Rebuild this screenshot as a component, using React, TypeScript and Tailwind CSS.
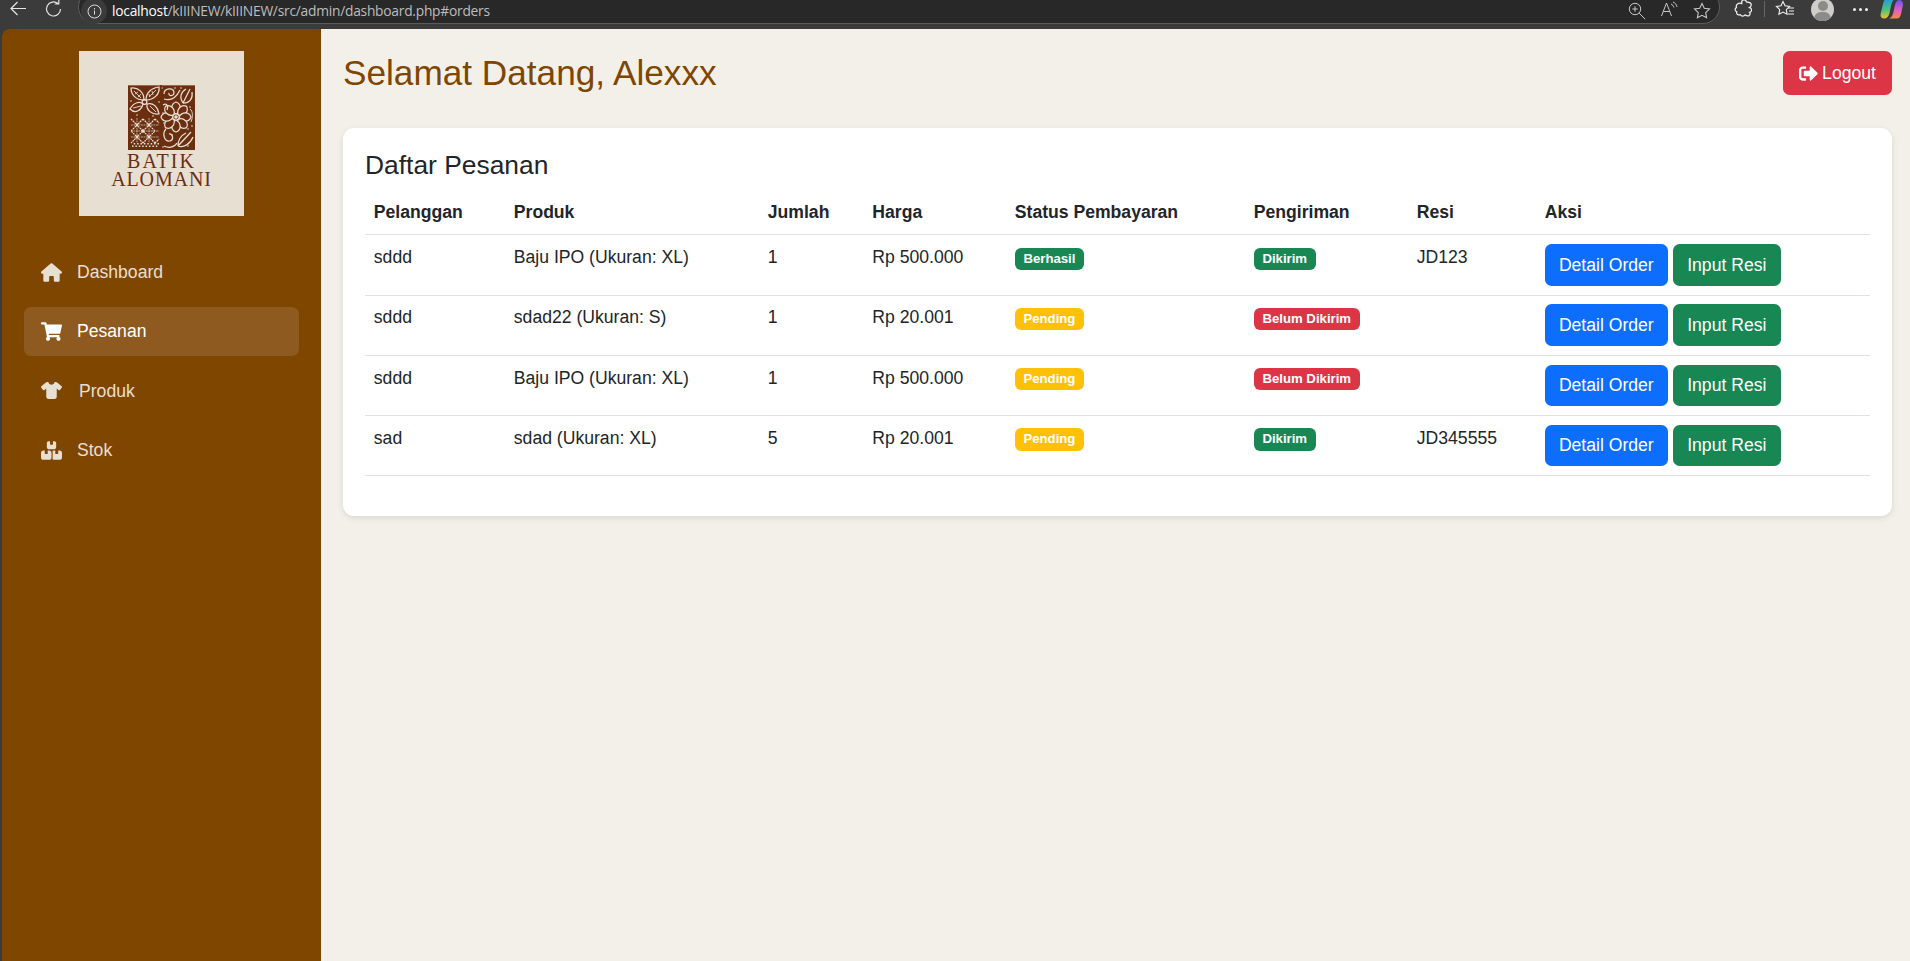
import React from "react";
import { FaHouse, FaShirt, FaBoxesStacked } from "react-icons/fa6";
import { FaSignOutAlt, FaShoppingCart } from "react-icons/fa";

const C = "#e8dfd3";

function BatikMotif() {
  const petals = [0, 45, 90, 135, 180, 225, 270, 315];
  const dots: [number, number][] = [];
  for (let x = 4; x < 31; x += 3.4) {
    dots.push([x, 62]);
    dots.push([x + 1.7, 59.5]);
  }
  const specks: [number, number][] = [
    [3, 16], [31, 17], [9, 30], [25, 31], [35, 28], [62, 22], [36, 38], [64, 41], [44, 50], [35, 62], [60, 44], [53, 3], [34, 3], [47, 3], [60, 61],
  ];
  return (
    <svg width="67" height="65" viewBox="0 0 67 65" className="block">
      <rect width="67" height="65" fill="#6b2e10" />
      <rect width="67" height="1" fill="#9a6a4c" />
      <g fill="none" stroke={C} strokeWidth="1.25">
        <path d="M3 3 C10 2 16 7 16 15 C8 15 3 10 3 3Z" />
        <path d="M31 2 C32 9 26 15 18 15 C18 8 23 3 31 2Z" />
        <path d="M2 24 C6 17 12 16 15 19 C13 26 7 29 2 24Z" />
        <path d="M19 19 C25 17 30 22 31 29 C24 30 18 25 19 19Z" />
        <circle cx="16.5" cy="17" r="2.4" />
        <path d="M6 6 L13 13 M28 5 L21 12 M5 23 L13 21 M22 21 L28 27" strokeWidth="0.9" />
        <path d="M7 9 L10 7 M10 12 L13 9 M24 6 L25 10 M21 9 L22 12" strokeWidth="0.8" />
      </g>
      <g fill="none" stroke={C} strokeWidth="1.2" strokeDasharray="1.8 0.7">
        <path d="M3 34 L15 46 L3 58 M15 34 L27 46 L15 58 M27 34 L31 38 M27 58 L31 54" />
        <path d="M15 34 L3 46 L15 58 M27 34 L15 46 L27 58" />
        <path d="M9 33 V58 M21 33 V58 M3 46 H31 M3 40 H31 M3 52 H31" strokeWidth="0.7" />
      </g>
      <g fill={C}>
        {dots.map(([x, y], i) => (
          <rect key={i} x={x} y={y - 1.5} width="1.5" height="1.5" />
        ))}
        {specks.map(([x, y], i) => (
          <circle key={i} cx={x} cy={y} r="0.8" />
        ))}
        <circle cx="9" cy="40" r="1.4" />
        <circle cx="21" cy="40" r="1.4" />
        <circle cx="9" cy="52" r="1.4" />
        <circle cx="21" cy="52" r="1.4" />
        <circle cx="15" cy="46" r="1.7" />
      </g>
      <rect x="32" y="0" width="1.6" height="65" fill="#6b2e10" />
      <g fill="#6b2e10" stroke={C} strokeWidth="1.2" transform="translate(48 32)">
        {petals.map((a) => (
          <path key={a} transform={`rotate(${a})`} d="M0 -3 C-5.500 -6 -5.500 -13 0 -15 C5.500 -13 5.500 -6 0 -3Z" />
        ))}
        <circle r="3.2" />
        <circle r="1.2" fill={C} />
      </g>
      <g fill="none" stroke={C} strokeWidth="1.25">
        <path d="M36 9 C36 3 45 2 46 7 C46 12 40 11 41 8" />
        <path d="M36 14 C42 16 48 13 52 5" />
        <path d="M55 18 L62 4 M55 18 C51 12 53 7 58 4 M55 18 C62 18 65 13 64 7" />
        <path d="M35 20 C38 18 41 20 39 25" />
        <path d="M38 44 C34 48 36 57 42 56 C46 55 45 48 41 49" />
        <path d="M36 61 C40 63 46 63 49 58" />
        <path d="M50 61 L63 47 M50 61 C50 54 54 50 58 48 M50 61 C56 63 62 59 65 52" />
        <path d="M62 24 C65 26 65 32 63 37" strokeWidth="0.9" />
      </g>
    </svg>
  );
}

function Logo() {
  return (
    <div className="w-[165px] h-[165px] bg-[#e8dfd3] flex flex-col items-center pt-[34px] mx-auto">
      <BatikMotif />
      <div
        className="mt-[3px] text-[#6b2e10] text-center text-[20px] leading-[17.500px] tracking-[0.9px]"
        style={{ fontFamily: '"Liberation Serif", serif' }}
      >
        <div className="tracking-[2px]">BATIK</div>
        <div>ALOMANI</div>
      </div>
    </div>
  );
}

function BrowserBar() {
  const s = "#c8c8c8";
  return (
    <div className="h-[29px] bg-[#3b3b3b] flex items-start overflow-hidden shrink-0">
      <svg width="20" height="18" viewBox="0 0 20 18" className="ml-[8px]" fill="none" stroke="#e6e6e6" strokeWidth="1.2">
        <path d="M18 8.5H3M9.500 2 3 8.500l6.500 6.500" />
      </svg>
      <svg width="18" height="18" viewBox="0 0 18 18" className="ml-[17px]" fill="none" stroke="#e6e6e6" strokeWidth="1.2">
        <path d="M15.500 9a7 7 0 1 1-2.400-5.300M13.800 0v4h-4" />
      </svg>
      <div className="ml-[15px] -mt-[10px] h-[34px] w-[1642px] rounded-full border border-[#5c5c5c] bg-[#282828] flex items-center pr-[8px]">
        <div className="w-[26px] h-[26px] rounded-full bg-[#3b3b3b] ml-[2px] mt-[8px] flex items-center justify-center shrink-0">
          <svg width="15" height="15" viewBox="0 0 15 15" fill="none" stroke="#dcdcdc" strokeWidth="1">
            <circle cx="7.500" cy="7.500" r="6.500" />
            <path d="M7.500 6.500v4M7.500 4v1.400" />
          </svg>
        </div>
        <div
          className="ml-[5px] mt-[9px] text-[13.800px] text-[#bdbdbd] whitespace-nowrap flex-1"
          style={{ fontFamily: '"Open Sans", sans-serif', letterSpacing: "-0.25px" }}
        >
          <span className="text-white">localhost</span>/kIIINEW/kIIINEW/src/admin/dashboard.php#orders
        </div>
        <div className="flex items-center gap-[13px] mt-[8px]">
          <svg width="20" height="20" viewBox="0 0 20 20" fill="none" stroke={s} strokeWidth="1">
            <circle cx="8" cy="8" r="5.700" />
            <path d="M5.300 8h5.400M8 5.300v5.400M12.200 12.200l6 6" />
          </svg>
          <svg width="20" height="20" viewBox="0 0 20 20" fill="none" stroke={s} strokeWidth="1">
            <path d="M1.500 15 6.500 2l5 13M3.300 10.500h6.400" />
            <path d="M11 3c1.500.5 2.500 1.800 2.800 3.500M13 1c2.200.8 3.600 2.600 4 5" />
          </svg>
          <svg width="18" height="18" viewBox="0 0 18 18" fill="none" stroke={s} strokeWidth="1.100">
            <path d="M9 1.500l2.300 4.800 5.200.7-3.800 3.600.9 5.200L9 13.300l-4.600 2.500.9-5.200L1.500 7l5.200-.7z" />
          </svg>
        </div>
      </div>
      <svg width="20" height="20" viewBox="0 0 18 18" className="ml-[14px] -mt-[1px] shrink-0" fill="none" stroke="#f2f2f2" strokeWidth="1.100">
        <path d="M7 2.500c0-2.200 4-2.200 4 0 0 .7 4-.6 4.400 2.200.3 1.600-.4 2.400-1.400 3 2.400.4 2.400 4 0 4.300 1 .8.3 3.700-2 3.200-1.200-.2-1.400-1-2.200-.8-.4 1.200-3.400 1.400-4-.2-2 .6-3.900-.6-3.300-2.700-2-.7-2-3.300-.3-3.800-1-2.500 2-4.600 4.800-3.600z" />
      </svg>
      <div className="ml-[10px] mt-[1px] w-px h-[16px] bg-[#666666]" />
      <svg width="20" height="18" viewBox="0 0 20 18" className="ml-[10px]" fill="none" stroke="#f2f2f2" strokeWidth="1.100">
        <path d="M8 1.500l2 4.300 4.600.6-3.300 3.200.8 4.600L8 12l-4.100 2.200.8-4.600L1.400 6.400 6 5.800z" />
        <path d="M13 8h6M14 11h5M13 14h6" />
      </svg>
      <div className="ml-[16px] -mt-[2px] w-[23px] h-[23px] rounded-full bg-[#cfcdca] relative overflow-hidden shrink-0">
        <div className="absolute left-[7px] top-[3px] w-[10px] h-[10px] rounded-full bg-[#8b8b89]" />
        <div className="absolute left-[3px] top-[14px] w-[17px] h-[14px] rounded-full bg-[#8b8b89]" />
      </div>
      <div className="ml-[19px] mt-[8px] flex gap-[3px]">
        <span className="w-[3px] h-[3px] rounded-full bg-[#f0f0f0]" />
        <span className="w-[3px] h-[3px] rounded-full bg-[#f0f0f0]" />
        <span className="w-[3px] h-[3px] rounded-full bg-[#f0f0f0]" />
      </div>
      <svg width="23" height="20" viewBox="0 0 23 20" className="ml-[12px] -mt-[1px] shrink-0">
        <defs>
          <linearGradient id="cpA" x1="0.3" y1="0" x2="0.4" y2="1">
            <stop offset="0" stopColor="#1f9ae0" />
            <stop offset="0.55" stopColor="#4fc27a" />
            <stop offset="1" stopColor="#f2c230" />
          </linearGradient>
          <linearGradient id="cpB" x1="0.5" y1="0" x2="0.5" y2="1">
            <stop offset="0" stopColor="#6a55ee" />
            <stop offset="0.55" stopColor="#e35ec4" />
            <stop offset="1" stopColor="#f58a3c" />
          </linearGradient>
        </defs>
        <path d="M6 0H15C13 1 12 3 11 7L9.500 14C8.800 17.500 7 19.500 4 19.500 1 19.500 0 17 .8 14L3 5C3.700 2 4.500 0 6 0Z" fill="url(#cpA)" />
        <path d="M9 19.500H17C19 19.500 20.300 18 21 15L22.800 7C23.500 3.500 22 1 19.500 1 17 1 15.700 3 15 6L13.500 13C12.800 16.500 11.500 18.500 9 19.500Z" fill="url(#cpB)" />
      </svg>
    </div>
  );
}

const nav = [
  { icon: FaHouse, label: "Dashboard", gap: "ml-[15px]" },
  { icon: FaShoppingCart, label: "Pesanan", active: true, gap: "ml-[15px]" },
  { icon: FaShirt, label: "Produk", gap: "ml-[17px]" },
  { icon: FaBoxesStacked, label: "Stok", gap: "ml-[15px]" },
];

function Sidebar() {
  return (
    <aside className="w-[319px] shrink-0 bg-[#7f4600] rounded-tl-[8px] pt-[22px]">
      <Logo />
      <nav className="mt-[31.500px] mx-[22px] flex flex-col gap-[10.400px]">
        {nav.map((n) => {
          const Icon = n.icon;
          return (
            <div
              key={n.label}
              className={`h-[49px] rounded-[7px] pl-[16px] flex items-center text-[17.600px] ${
                n.active ? "bg-[#8f5a20] text-white" : "text-[#e8dfd3]"
              }`}
            >
              <span className="w-[22px] flex justify-center">
                <Icon size={21} />
              </span>
              <span className={n.gap}>{n.label}</span>
            </div>
          );
        })}
      </nav>
    </aside>
  );
}

type Row = {
  c: string;
  p: string;
  q: string;
  h: string;
  pay: "ok" | "wait";
  ship: "sent" | "no";
  r: string;
  cell: string;
  badge: string;
  btn: string;
};

const rows: Row[] = [
  { c: "sddd", p: "Baju IPO (Ukuran: XL)", q: "1", h: "Rp 500.000", pay: "ok", ship: "sent", r: "JD123", cell: "pt-[9px] h-[61px]", badge: "mt-[4px] h-[22px]", btn: "h-[42px]" },
  { c: "sddd", p: "sdad22 (Ukuran: S)", q: "1", h: "Rp 20.001", pay: "wait", ship: "no", r: "", cell: "pt-[8px] h-[60px]", badge: "mt-[4px] h-[22px]", btn: "h-[42px]" },
  { c: "sddd", p: "Baju IPO (Ukuran: XL)", q: "1", h: "Rp 500.000", pay: "wait", ship: "no", r: "", cell: "pt-[9px] h-[60px]", badge: "mt-[3px] h-[22px]", btn: "h-[41px]" },
  { c: "sad", p: "sdad (Ukuran: XL)", q: "5", h: "Rp 20.001", pay: "wait", ship: "sent", r: "JD345555", cell: "pt-[9px] h-[60px]", badge: "mt-[3px] h-[23px]", btn: "h-[41px]" },
];

function Badge({ color, size, children }: { color: string; size: string; children: React.ReactNode }) {
  return (
    <span className={`${color} ${size} block w-fit px-[8.600px] rounded-[6px] text-white text-[13.200px] font-bold leading-[22px] whitespace-nowrap`}>
      {children}
    </span>
  );
}

const th = "px-[8.800px] py-[8.800px] text-left font-bold leading-[26.400px] border-b border-[#dee2e6]";
const td = "px-[8.800px] pb-0 align-top leading-[26.400px] border-b border-[#dee2e6]";

export default function App() {
  return (
    <div
      className="h-screen overflow-hidden flex flex-col bg-[#3b3b3b] text-[#212529]"
      style={{ fontFamily: '"Liberation Sans", Arial, sans-serif' }}
    >
      <BrowserBar />
      <div className="flex flex-1 min-h-0 pl-[2px]">
        <Sidebar />
        <main className="flex-1 bg-[#f3f0e9] pl-[22px] pr-[18px] pt-[22px]">
          <header className="flex justify-between items-start h-[77px]">
            <h2 className="text-[35.200px] leading-[44px] text-[#7f4600] font-normal">Selamat Datang, Alexxx</h2>
            <button className="h-[44px] w-[109px] rounded-[6.600px] bg-[#dc3545] text-white text-[17.600px] flex items-center justify-center gap-[4px]">
              <FaSignOutAlt size={19} />
              Logout
            </button>
          </header>
          <section className="bg-white rounded-[11px] shadow-[0_2px_6px_rgba(0,0,0,0.1)] p-[22px] pb-[40px]">
            <h4 className="text-[26.400px] leading-[30px] font-normal mb-[10px]">Daftar Pesanan</h4>
            <table className="w-full table-fixed border-collapse text-[17.600px]">
              <colgroup>
                <col className="w-[140px]" />
                <col className="w-[254px]" />
                <col className="w-[104.500px]" />
                <col className="w-[142.500px]" />
                <col className="w-[239px]" />
                <col className="w-[163px]" />
                <col className="w-[128px]" />
                <col className="w-[334px]" />
              </colgroup>
              <thead>
                <tr>
                  {["Pelanggan", "Produk", "Jumlah", "Harga", "Status Pembayaran", "Pengiriman", "Resi", "Aksi"].map((h) => (
                    <th key={h} className={th}>
                      {h}
                    </th>
                  ))}
                </tr>
              </thead>
              <tbody>
                {rows.map((r, i) => (
                  <tr key={i}>
                    <td className={`${td} ${r.cell}`}>{r.c}</td>
                    <td className={`${td} ${r.cell}`}>{r.p}</td>
                    <td className={`${td} ${r.cell}`}>{r.q}</td>
                    <td className={`${td} ${r.cell}`}>{r.h}</td>
                    <td className={`${td} ${r.cell}`}>
                      {r.pay === "ok" ? (
                        <Badge color="bg-[#198754]" size={r.badge}>Berhasil</Badge>
                      ) : (
                        <Badge color="bg-[#ffc107]" size={r.badge}>Pending</Badge>
                      )}
                    </td>
                    <td className={`${td} ${r.cell}`}>
                      {r.ship === "sent" ? (
                        <Badge color="bg-[#198754]" size={r.badge}>Dikirim</Badge>
                      ) : (
                        <Badge color="bg-[#dc3545]" size={r.badge}>Belum Dikirim</Badge>
                      )}
                    </td>
                    <td className={`${td} ${r.cell}`}>{r.r}</td>
                    <td className={`${td} ${r.cell}`}>
                      <div className="flex gap-[5px]">
                        <button className={`${r.btn} w-[123px] rounded-[6.600px] bg-[#0d6efd] text-white`}>Detail Order</button>
                        <button className={`${r.btn} w-[108px] rounded-[6.600px] bg-[#198754] text-white`}>Input Resi</button>
                      </div>
                    </td>
                  </tr>
                ))}
              </tbody>
            </table>
          </section>
        </main>
      </div>
    </div>
  );
}
